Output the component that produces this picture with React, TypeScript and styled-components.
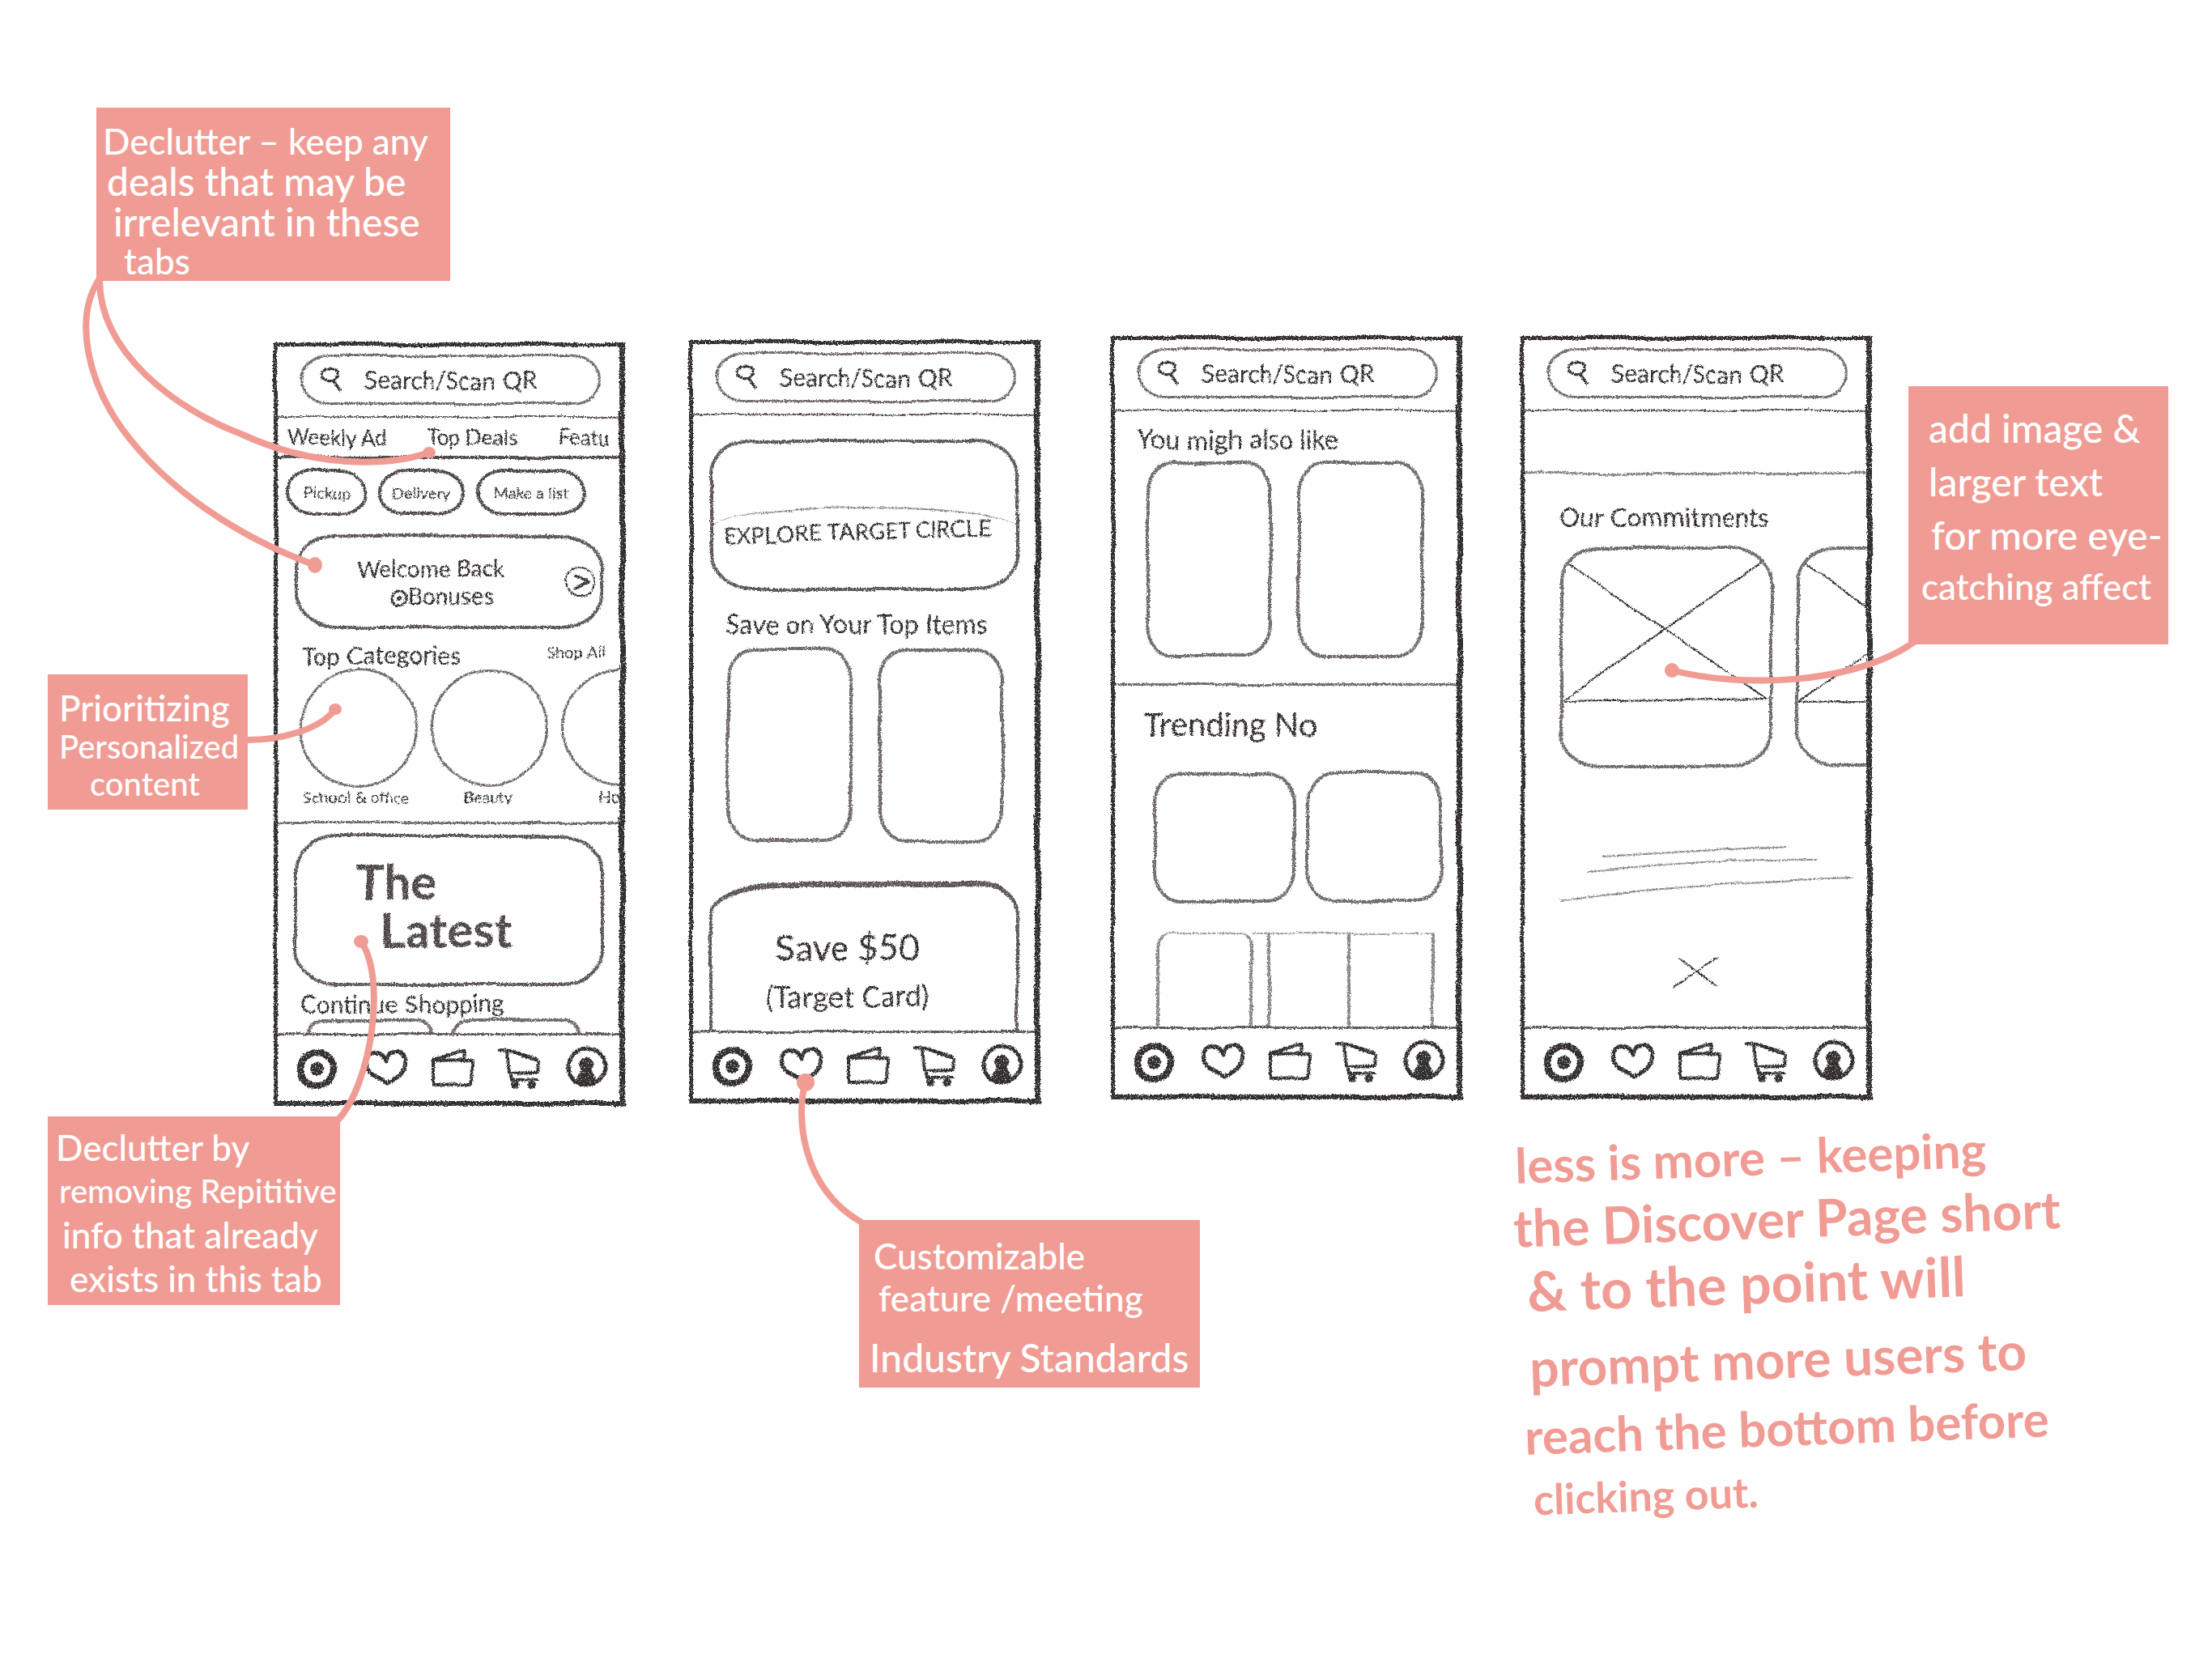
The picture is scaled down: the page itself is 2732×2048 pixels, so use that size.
import React from 'react';
import styled, { createGlobalStyle } from 'styled-components';

const ink = '#332d2d';
const coral = '#f09c94';

const GlobalStyle = createGlobalStyle`
  * { box-sizing: border-box; }
  body { margin: 0; background: #fefefe; }
  body, button, input { font-family: Lato, "Open Sans", sans-serif; color: ${ink}; }
  button { background: none; border: 0; padding: 0; margin: 0; cursor: pointer; }
  h2, h3, p { margin: 0; font-weight: 400; }
`;

/* ---------- board ---------- */

const Board = styled.main`
  position: relative;
  min-height: 100vh;
  padding-top: 415px;
  overflow: hidden;
`;

const Screens = styled.div`
  display: grid;
  grid-template-columns: 338fr 513fr 521fr 506fr 434fr 420fr;
  align-items: start;
  & > :first-child { grid-column: 2; }
`;

const Phone = styled.section<{ $drop: number }>`
  display: flex;
  flex-direction: column;
  width: 100%;
  max-width: 434px;
  height: 943px;
  margin-top: ${p => p.$drop}px;
  border: solid ${ink};
  border-width: 5px 7px 6px 5px;
  filter: url(#pencil);
`;

const Header = styled.header`
  flex: none;
  height: 88px;
  padding: 10px 24px 0 28px;
  border-bottom: 2px solid #5d5757;
`;

const SearchBox = styled.label`
  display: flex;
  align-items: center;
  gap: 26px;
  height: 62px;
  padding: 0 20px 0 21px;
  border: 3px solid #6f6a6a;
  border-radius: 34px / 31px;
  svg { flex: none; }
`;

const SearchInput = styled.input`
  flex: 1;
  min-width: 0;
  border: 0;
  padding: 0;
  outline: 0;
  background: none;
  font-size: 30px;
  line-height: 40px;
  &::placeholder { color: ${ink}; opacity: 1; }
`;

const Body = styled.div`
  flex: 1;
  min-height: 0;
  display: flex;
  flex-direction: column;
  overflow: hidden;
`;

const NavBar = styled.nav`
  flex: none;
  display: flex;
  align-items: center;
  justify-content: space-between;
  height: 84px;
  padding: 0 12px 0 20px;
  border-top: 3px solid #5d5757;
`;

const NavButton = styled.button`
  width: 56px;
  height: 56px;
  svg { display: block; }
`;

/* ---------- shared pieces ---------- */

const Tabs = styled.nav`
  flex: none;
  display: flex;
  gap: 50px;
  height: 51px;
  padding: 6px 0 0 12px;
  border-bottom: 4px solid #4d4747;
  overflow: hidden;
`;

const Tab = styled.a`
  flex: none;
  color: ${ink};
  font-size: 26px;
  line-height: 36px;
  text-decoration: none;
  white-space: nowrap;
`;

const Pills = styled.div`
  display: flex;
  gap: 14px;
  padding: 12px 10px 0;
`;

const Pill = styled.button<{ $grow: number }>`
  flex: 0 1 ${p => p.$grow}px;
  height: 58px;
  border: 4px solid #4d4747;
  border-radius: 34px / 28px;
  font-size: 20px;
  line-height: 24px;
  white-space: nowrap;
`;

const Card = styled.article<{ $h?: number; $top: number }>`
  flex: ${p => (p.$h ? 'none' : '1')};
  display: flex;
  flex-direction: column;
  height: ${p => (p.$h ? `${p.$h}px` : 'auto')};
  margin: ${p => p.$top}px 20px 0 20px;
  border: 4px solid #5d5757;
  border-radius: 52px / 44px;
`;

const WelcomeCard = styled(Card)`
  flex-direction: row;
  align-items: center;
  padding-right: 6px;
`;

const Welcome = styled.p`
  flex: 1;
  font-size: 28px;
  line-height: 34px;
  text-align: center;
  svg { vertical-align: -3px; }
  span { padding-left: 28px; }
`;

const RoundButton = styled.button`
  width: 38px;
  height: 38px;
  svg { display: block; }
`;

const SectionHead = styled.div<{ $top: number; $left: number }>`
  display: flex;
  justify-content: space-between;
  flex: none;
  padding: ${p => p.$top}px 18px 0 ${p => p.$left}px;
`;

const Heading = styled.h2<{ $size?: number }>`
  font-size: ${p => p.$size || 32}px;
  line-height: ${p => (p.$size === 40 ? 44 : 34)}px;
  white-space: nowrap;
`;

const SmallLink = styled.a`
  color: ${ink};
  font-size: 20px;
  line-height: 24px;
  text-decoration: none;
`;

const Categories = styled.div`
  flex: none;
  display: flex;
  gap: 22px;
  padding-left: 27px;
  overflow: hidden;
`;

const Category = styled.figure<{ $w: number }>`
  flex: 0 0 ${p => p.$w}px;
  min-width: 0;
  margin: 0;
  &::before {
    content: '';
    display: block;
    width: 140px;
    height: 140px;
    border: 3px solid #6f6a6a;
    border-radius: 50%;
  }
`;

const Caption = styled.figcaption`
  font-size: 20px;
  line-height: 24px;
  text-align: center;
  white-space: nowrap;
`;

const Divider = styled.hr<{ $top: number }>`
  flex: none;
  width: 100%;
  margin: ${p => p.$top}px 0 0;
  border: 0;
  border-top: 3px solid #6f6a6a;
`;

const LatestTitle = styled.h3`
  padding: 23px 0 0 72px;
  font-size: 60px;
  line-height: 60px;
  font-weight: 700;
  color: #4d4747;
  span { display: block; padding-left: 30px; }
`;

const Tiles = styled.div<{ $top: number; $left: number; $gap: number }>`
  flex: none;
  display: flex;
  gap: ${p => p.$gap}px;
  padding: ${p => p.$top}px 0 0 ${p => p.$left}px;
`;

const Tile = styled.div<{ $w: number; $h: number }>`
  flex: 0 1 ${p => p.$w}px;
  height: ${p => p.$h}px;
  border: 4px solid #6f6a6a;
  border-radius: 34px / 40px;
`;

const Peek = styled.div<{ $w: number }>`
  flex: 0 1 ${p => p.$w}px;
  height: 60px;
  border: 4px solid #6f6a6a;
  border-radius: 20px 20px 0 0;
`;

const CircleBanner = styled.div`
  flex: 1;
  margin-top: 79px;
  padding: 12px 0 0 14px;
  border-top: 2px solid #8b8686;
  border-radius: 50% 50% 0 0 / 24px 24px 0 0;
`;

const BannerText = styled.p`
  width: max-content;
  font-size: 28px;
  line-height: 32px;
  transform: rotate(-2deg);
`;

const OfferCard = styled(Card)`
  border-width: 7px 4px 0;
  border-radius: 90px 50px 0 0 / 40px 44px 0 0;
  padding: 44px 40px 0 0;
  text-align: center;
`;

const OfferText = styled.p<{ $size: number; $h: number }>`
  font-size: ${p => p.$size}px;
  line-height: ${p => p.$h}px;
  white-space: nowrap;
`;

const SwatchRow = styled.div`
  flex: 1;
  display: flex;
  margin: 37px 28px 0 51px;
`;

const Swatch = styled.div<{ $w: number; $lead?: boolean }>`
  flex: 0 1 ${p => p.$w}px;
  border-top: 2px solid #a5a1a1;
  border-right: 4px solid #8b8686;
  border-left: ${p => (p.$lead ? '4px solid #8b8686' : '0')};
  border-radius: ${p => (p.$lead ? '20px 16px 0 0' : '0')};
`;

const Blank = styled.div`
  flex: none;
  height: 78px;
  border-bottom: 3px solid #8b8686;
`;

const Carousel = styled.div`
  flex: none;
  display: flex;
  gap: 28px;
  padding: 19px 0 0 43px;
  overflow: hidden;
`;

const MediaCard = styled.article`
  flex: 0 0 264px;
  height: 273px;
  border: 4px solid #6f6a6a;
  border-radius: 50px / 44px;
  overflow: hidden;
  svg { display: block; width: 100%; }
`;

const Rules = styled.div`
  display: flex;
  flex-direction: column;
  align-items: center;
  gap: 68px;
  padding-top: 94px;
  svg { max-width: 100%; }
`;

/* ---------- annotations ---------- */

const Note = styled.aside<{ $x: number; $y: number; $w: number; $h: number; $top: number }>`
  position: absolute;
  left: ${p => (p.$x / 2732) * 100}%;
  top: ${p => p.$y}px;
  width: ${p => p.$w}px;
  min-height: ${p => p.$h}px;
  padding-top: ${p => p.$top}px;
  background: ${coral};
  color: #fff;
  font-weight: 500;
  white-space: nowrap;
`;

const NoteLine = styled.span<{ $in: number; $size: number; $lh: number; $gap?: number }>`
  display: block;
  margin-top: ${p => p.$gap || 0}px;
  padding-left: ${p => p.$in}px;
  font-size: ${p => p.$size}px;
  line-height: ${p => p.$lh}px;
`;

const Remark = styled.p`
  padding: 25px 0 80px 68.4%;
  color: ${coral};
  font-weight: 700;
  white-space: nowrap;
`;

const RemarkLine = styled(NoteLine)`
  width: max-content;
  transform: rotate(-2deg);
`;

const Connectors = styled.svg`
  position: absolute;
  left: 0;
  top: 0;
  width: 100%;
  height: 2048px;
  pointer-events: none;
`;

/* ---------- icons ---------- */

const stroke = { fill: 'none', stroke: ink, strokeLinecap: 'round', strokeLinejoin: 'round' } as const;

const TargetIcon = () => (
  <svg width="56" height="56" viewBox="0 0 56 56" aria-hidden="true">
    <circle cx="28" cy="29" r="20" {...stroke} strokeWidth="8" />
    <circle cx="28" cy="29" r="8" fill={ink} />
  </svg>
);

const HeartIcon = () => (
  <svg width="56" height="56" viewBox="0 0 56 56" aria-hidden="true">
    <path d="M30 19C26 8 15 5 8 12C1 22 5 32 13 37L31 46C42 41 53 34 54 22C54 10 46 6 38 8C34 9 31 13 30 19Z" {...stroke} strokeWidth="5" />
  </svg>
);

const WalletIcon = () => (
  <svg width="56" height="56" viewBox="0 0 56 56" aria-hidden="true">
    <path d="M5 18L51 17Q53 17 53 21L52 44Q52 47 48 47L8 48Q5 48 5 45L5 18L39 6L43 6L42 15" {...stroke} strokeWidth="4" />
  </svg>
);

const CartIcon = () => (
  <svg width="56" height="56" viewBox="0 0 56 56" aria-hidden="true">
    <path d="M3 4L16 5L48 15Q52 17 51 20L50 29Q49 31 46 31L15 32L12 6M17 33L18 41L49 40" {...stroke} strokeWidth="4" />
    <circle cx="22" cy="47" r="5" fill={ink} />
    <circle cx="42" cy="47" r="5" fill={ink} />
  </svg>
);

const ProfileIcon = () => (
  <svg width="56" height="56" viewBox="0 0 56 56" aria-hidden="true">
    <circle cx="28" cy="26" r="23" {...stroke} strokeWidth="5" />
    <circle cx="27" cy="23" r="9" fill={ink} />
    <path d="M23 28L31 28Q39 35 40 46Q28 53 15 46Q16 35 23 28Z" fill={ink} />
  </svg>
);

const SearchIcon = () => (
  <svg width="28" height="32" viewBox="0 0 28 32" aria-hidden="true">
    <path d="M9 17C-1 15 1 3 10 3C21 1 25 7 21 13C19 17 14 19 9 17M17 18L25 29" {...stroke} strokeWidth="3" />
  </svg>
);

const Bullseye = () => (
  <svg width="22" height="22" viewBox="0 0 22 22" aria-hidden="true">
    <circle cx="11" cy="11" r="9" {...stroke} strokeWidth="3" />
    <circle cx="11" cy="11" r="3" fill={ink} />
  </svg>
);

const navItems = [
  { label: 'Discover', Icon: TargetIcon },
  { label: 'Favorites', Icon: HeartIcon },
  { label: 'Wallet', Icon: WalletIcon },
  { label: 'Cart', Icon: CartIcon },
  { label: 'Profile', Icon: ProfileIcon },
];

const Screen = ({ drop = 0, children }: { drop?: number; children: React.ReactNode }) => (
  <Phone $drop={drop}>
    <Header>
      <SearchBox>
        <SearchIcon />
        <SearchInput type="text" aria-label="Search" placeholder="Search/Scan QR" />
      </SearchBox>
    </Header>
    <Body>{children}</Body>
    <NavBar>
      {navItems.map(({ label, Icon }) => (
        <NavButton key={label} aria-label={label}><Icon /></NavButton>
      ))}
    </NavBar>
  </Phone>
);

const Placeholder = () => (
  <MediaCard>
    <svg viewBox="0 0 256 190" height="190" aria-hidden="true">
      <path d="M8 18L252 184M248 14L2 186M0 188L256 184" {...stroke} strokeWidth="2" />
    </svg>
  </MediaCard>
);

type Line = { text: string; indent: number; size: number; lh: number; gap?: number };
type NoteData = { x: number; y: number; w: number; h: number; top: number; lines: Line[] };

const notes: NoteData[] = [
  { x: 119, y: 133, w: 437, h: 214, top: 16, lines: [
    { text: 'Declutter – keep any', indent: 8, size: 44, lh: 50 },
    { text: 'deals that may be', indent: 13, size: 48, lh: 50 },
    { text: 'irrelevant in these', indent: 21, size: 48, lh: 50 },
    { text: 'tabs', indent: 34, size: 44, lh: 46 },
  ] },
  { x: 59, y: 833, w: 247, h: 167, top: 17, lines: [
    { text: 'Prioritizing', indent: 14, size: 44, lh: 48 },
    { text: 'Personalized', indent: 14, size: 40, lh: 48 },
    { text: 'content', indent: 52, size: 40, lh: 44 },
  ] },
  { x: 59, y: 1379, w: 361, h: 233, top: 11, lines: [
    { text: 'Declutter by', indent: 10, size: 44, lh: 54 },
    { text: 'removing Repititive', indent: 14, size: 40, lh: 54 },
    { text: 'info that already', indent: 18, size: 44, lh: 54 },
    { text: 'exists in this tab', indent: 27, size: 44, lh: 54 },
  ] },
  { x: 1061, y: 1507, w: 421, h: 207, top: 18, lines: [
    { text: 'Customizable', indent: 18, size: 44, lh: 52 },
    { text: 'feature /meeting', indent: 24, size: 44, lh: 52 },
    { text: 'Industry Standards', indent: 13, size: 48, lh: 52, gap: 22 },
  ] },
  { x: 2357, y: 477, w: 321, h: 319, top: 19, lines: [
    { text: 'add image &', indent: 25, size: 48, lh: 66 },
    { text: 'larger text', indent: 25, size: 48, lh: 66 },
    { text: 'for more eye-', indent: 28, size: 48, lh: 66 },
    { text: 'catching affect', indent: 16, size: 44, lh: 60 },
  ] },
];

const remark: Line[] = [
  { text: 'less is more – keeping', indent: 2, size: 60, lh: 76 },
  { text: 'the Discover Page short', indent: 0, size: 64, lh: 76 },
  { text: '& to the point will', indent: 17, size: 68, lh: 84 },
  { text: 'prompt more users to', indent: 20, size: 64, lh: 84, gap: 10 },
  { text: 'reach the bottom before', indent: 14, size: 60, lh: 84 },
  { text: 'clicking out.', indent: 25, size: 52, lh: 84 },
];

export default function App() {
  return (
    <>
      <GlobalStyle />
      <svg width="0" height="0" style={{ position: 'absolute' }} aria-hidden="true">
        <filter id="pencil" x="-2%" y="-2%" width="104%" height="104%">
          <feTurbulence type="fractalNoise" baseFrequency="0.014" numOctaves="1" seed="4" result="wave" />
          <feDisplacementMap in="SourceGraphic" in2="wave" scale="6" xChannelSelector="R" yChannelSelector="G" result="wobble" />
          <feTurbulence type="fractalNoise" baseFrequency="0.6" numOctaves="2" seed="9" result="grain" />
          <feDisplacementMap in="wobble" in2="grain" scale="4" xChannelSelector="R" yChannelSelector="G" result="rough" />
          <feColorMatrix in="grain" type="matrix" values="0 0 0 0 0  0 0 0 0 0  0 0 0 0 0  0 0 0 -5 4" result="mask" />
          <feComposite in="rough" in2="mask" operator="in" />
        </filter>
      </svg>
      <Board>
        <Screens>
          <Screen drop={8}>
            <Tabs>
              <Tab href="#weekly">Weekly Ad</Tab>
              <Tab href="#deals">Top Deals</Tab>
              <Tab href="#featured">Featu</Tab>
            </Tabs>
            <Pills>
              <Pill $grow={100}>Pickup</Pill>
              <Pill $grow={107}>Delivery</Pill>
              <Pill $grow={135}>Make a list</Pill>
            </Pills>
            <WelcomeCard $top={23} $h={117}>
              <Welcome>Welcome Back<br /><span><Bullseye />Bonuses</span></Welcome>
              <RoundButton aria-label="Next">
                <svg width="38" height="38" viewBox="0 0 38 38" aria-hidden="true">
                  <circle cx="19" cy="19" r="18" {...stroke} strokeWidth="2" />
                  <path d="M14 12L29 19L13 28" {...stroke} strokeWidth="4" />
                </svg>
              </RoundButton>
            </WelcomeCard>
            <SectionHead $top={15} $left={30}>
              <Heading $size={30}>Top Categories</Heading>
              <SmallLink href="#all">Shop All</SmallLink>
            </SectionHead>
            <Categories>
              <Category $w={140}><Caption>School &amp; office</Caption></Category>
              <Category $w={140}><Caption>Beauty</Caption></Category>
              <Category $w={118}><Caption>Ho</Caption></Category>
            </Categories>
            <Divider $top={19} />
            <Card $top={13} $h={187}>
              <LatestTitle>The<span>Latest</span></LatestTitle>
            </Card>
            <SectionHead $top={4} $left={28}>
              <Heading $size={30}>Continue Shopping</Heading>
            </SectionHead>
            <Tiles $top={2} $left={36} $gap={22}>
              <Peek $w={156} />
              <Peek $w={160} />
            </Tiles>
          </Screen>

          <Screen drop={5}>
            <Card $top={30} $h={187}>
              <CircleBanner><BannerText>EXPLORE TARGET CIRCLE</BannerText></CircleBanner>
            </Card>
            <SectionHead $top={24} $left={40}>
              <Heading>Save on Your Top Items</Heading>
            </SectionHead>
            <Tiles $top={12} $left={41} $gap={31}>
              <Tile $w={156} $h={241} />
              <Tile $w={156} $h={241} />
            </Tiles>
            <OfferCard $top={48}>
              <OfferText $size={44} $h={60}>Save $50</OfferText>
              <OfferText $size={36} $h={60}>(Target Card)</OfferText>
            </OfferCard>
          </Screen>

          <Screen>
            <SectionHead $top={18} $left={28}>
              <Heading>You migh also like</Heading>
            </SectionHead>
            <Tiles $top={9} $left={38} $gap={31}>
              <Tile $w={156} $h={243} />
              <Tile $w={156} $h={243} />
            </Tiles>
            <Divider $top={32} />
            <SectionHead $top={26} $left={35}>
              <Heading $size={40}>Trending No</Heading>
            </SectionHead>
            <Tiles $top={36} $left={47} $gap={12}>
              <Tile $w={176} $h={162} />
              <Tile $w={170} $h={162} />
            </Tiles>
            <SwatchRow>
              <Swatch $w={122} $lead />
              <Swatch $w={22} />
              <Swatch $w={102} />
              <Swatch $w={105} />
            </SwatchRow>
          </Screen>

          <Screen>
            <Blank />
            <SectionHead $top={36} $left={43}>
              <Heading>Our Commitments</Heading>
            </SectionHead>
            <Carousel>
              <Placeholder />
              <Placeholder />
            </Carousel>
            <Rules>
              <svg width="400" height="72" viewBox="0 0 400 72" aria-hidden="true">
                <path d="M86 16L312 3M69 34Q232 18 350 20M34 70Q152 52 392 43" {...stroke} stroke="#8b8686" strokeWidth="2" />
              </svg>
              <svg width="60" height="38" viewBox="0 0 60 38" aria-hidden="true">
                <path d="M10 2L56 36M58 2L2 36" {...stroke} strokeWidth="2" />
              </svg>
            </Rules>
          </Screen>
        </Screens>

        <Remark>
          {remark.map(l => (
            <RemarkLine key={l.text} $in={l.indent} $size={l.size} $lh={l.lh} $gap={l.gap}>{l.text}</RemarkLine>
          ))}
        </Remark>

        {notes.map(n => (
          <Note key={n.lines[0].text} $x={n.x} $y={n.y} $w={n.w} $h={n.h} $top={n.top}>
            {n.lines.map(l => (
              <NoteLine key={l.text} $in={l.indent} $size={l.size} $lh={l.lh} $gap={l.gap}>{l.text}</NoteLine>
            ))}
          </Note>
        ))}

        <Connectors viewBox="0 0 2732 2048" preserveAspectRatio="none" aria-hidden="true">
          <g fill="none" stroke={coral} strokeWidth="8" strokeLinecap="round">
            <path d="M121 347C92 395 108 470 151 530C206 605 295 664 389 698" />
            <path d="M123 347C124 435 215 505 300 537C385 576 475 578 530 559" />
            <path d="M306 914C345 914 395 902 414 876" />
            <path d="M418 1383C458 1338 478 1210 446 1163" />
            <path d="M995 1337C984 1370 985 1466 1066 1511" />
            <path d="M2065 828C2150 850 2290 846 2364 793" />
          </g>
          <g fill={coral}>
            <ellipse cx="389" cy="698" rx="9" ry="10" />
            <ellipse cx="530" cy="559" rx="8" ry="7" />
            <ellipse cx="414" cy="876" rx="8" ry="7" />
            <ellipse cx="446" cy="1163" rx="9" ry="8" />
            <ellipse cx="995" cy="1337" rx="11" ry="11" />
            <ellipse cx="2065" cy="828" rx="9" ry="9" />
          </g>
        </Connectors>
      </Board>
    </>
  );
}
